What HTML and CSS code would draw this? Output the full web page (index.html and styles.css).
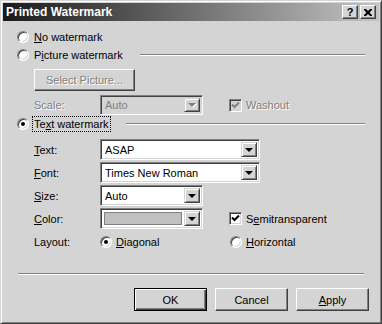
FILE: index.html
```html
<!DOCTYPE html>
<html lang="en">
<head>
    <meta charset="UTF-8">
    <title>Printed Watermark</title>
    <link rel="stylesheet" href="styles.css">
</head>
<body>
    <div class="window">
        <div class="titlebar">
            <span class="title">Printed Watermark</span>
            <span class="cap-btn help">?</span>
            <span class="cap-btn close">
                <svg width="8" height="7" viewBox="0 0 8 7"><path d="M0 0h2l2 2 2-2h2v1l-2.5 2.5L8 6v1H6L4 5 2 7H0V6l2.5-2.5L0 1z" fill="#000"/></svg>
            </span>
        </div>

        <div class="content">
            <div class="opt-row">
                <span class="radio"></span>
                <span class="opt-text"><u>N</u>o watermark</span>
            </div>
            <div class="opt-row">
                <span class="radio"></span>
                <span class="opt-text">P<u>i</u>cture watermark</span>
                <span class="groupline pic-line"></span>
            </div>

            <div class="select-row">
                <span class="btn disabled select-btn">Select Picture...</span>
            </div>

            <div class="field-row scale-row">
                <span class="label disabled-text">Scale:</span>
                <span class="combo short off">
                    <span class="combo-val">Auto</span>
                    <span class="drop off"><i class="tri"></i></span>
                </span>
                <span class="check off"><svg width="9" height="9" viewBox="0 0 9 9"><path d="M1 3.5l2.5 2.5 4.5-4.5" fill="none" stroke="#808080" stroke-width="2"/></svg></span>
                <span class="disabled-text check-text">Washout</span>
            </div>

            <div class="opt-row text-opt">
                <span class="radio on"></span>
                <span class="opt-text focus">Te<u>x</u>t watermark</span>
                <span class="groupline text-line"></span>
            </div>

            <div class="fields">
                <div class="field-row">
                    <span class="label"><u>T</u>ext:</span>
                    <span class="combo wide">
                        <span class="combo-val">ASAP</span>
                        <span class="drop"><i class="tri"></i></span>
                    </span>
                </div>
                <div class="field-row">
                    <span class="label"><u>F</u>ont:</span>
                    <span class="combo wide">
                        <span class="combo-val">Times New Roman</span>
                        <span class="drop"><i class="tri"></i></span>
                    </span>
                </div>
                <div class="field-row">
                    <span class="label"><u>S</u>ize:</span>
                    <span class="combo short">
                        <span class="combo-val">Auto</span>
                        <span class="drop"><i class="tri"></i></span>
                    </span>
                </div>
                <div class="field-row">
                    <span class="label"><u>C</u>olor:</span>
                    <span class="combo short">
                        <span class="swatch"></span>
                        <span class="drop"><i class="tri"></i></span>
                    </span>
                    <span class="check"><svg width="9" height="9" viewBox="0 0 9 9"><path d="M1 3.5l2.5 2.5 4.5-4.5" fill="none" stroke="#000" stroke-width="2"/></svg></span>
                    <span class="check-text">S<u>e</u>mitransparent</span>
                </div>
                <div class="field-row layout-row">
                    <span class="label">Layout:</span>
                    <span class="radio on"></span>
                    <span class="radio-text diag"><u>D</u>iagonal</span>
                    <span class="radio"></span>
                    <span class="radio-text"><u>H</u>orizontal</span>
                </div>
            </div>

            <div class="separator"></div>

            <div class="buttons">
                <span class="btn default">OK</span>
                <span class="btn">Cancel</span>
                <span class="btn"><u>A</u>pply</span>
            </div>
        </div>
    </div>
</body>
</html>
```

FILE: styles.css
```css
* {
    box-sizing: border-box;
}
body {
    margin: 0;
    background-color: #d4d4d4;
    font-family: "Liberation Sans", Arial, sans-serif;
    font-size: 11px;
    color: #000;
}
u {
    text-decoration: underline;
}
.window {
    width: 382px;
    height: 324px;
    border: 1px solid;
    border-color: #d4d4d4 #404040 #404040 #d4d4d4;
    box-shadow: inset 1px 1px 0 #fff, inset -1px -1px 0 #808080;
    padding: 2px;
    background-color: #d4d4d4;
}
.titlebar {
    height: 18px;
    display: flex;
    align-items: center;
    padding: 0 3px 0 3px;
    background: linear-gradient(to right, #1a1a1a, #c4c4c4);
}
.title {
    color: #fff;
    font-weight: bold;
    font-size: 12px;
    flex: 1;
}
.cap-btn {
    width: 16px;
    height: 14px;
    display: flex;
    align-items: center;
    justify-content: center;
    background-color: #d4d4d4;
    border: 1px solid;
    border-color: #fff #404040 #404040 #fff;
    box-shadow: inset -1px -1px 0 #808080;
    font-weight: bold;
    font-size: 11px;
    line-height: 1;
}
.help {
    margin-right: 2px;
}
.content {
    padding-top: 7px;
}
.opt-row {
    height: 18px;
    display: flex;
    align-items: center;
    padding-left: 14px;
    padding-right: 14px;
}
.opt-text {
    margin-left: 3px;
    padding: 1px 1px;
    border: 1px solid transparent;
}
.opt-text.focus {
    border: 1px dotted #000;
}
.radio {
    width: 12px;
    height: 12px;
    border-radius: 50%;
    background-color: #fff;
    border: 1px solid;
    border-color: #808080 #fff #fff #808080;
    box-shadow: inset 1px 1px 0 #404040, inset -1px -1px 0 #d4d4d4;
    display: flex;
    align-items: center;
    justify-content: center;
    flex-shrink: 0;
}
.radio.on::after {
    content: "";
    width: 4px;
    height: 4px;
    border-radius: 50%;
    background-color: #000;
}
.groupline {
    height: 2px;
    border-top: 1px solid #808080;
    border-bottom: 1px solid #fff;
    margin-left: auto;
}
.pic-line {
    width: 225px;
}
.text-line {
    width: 239px;
    margin-top: -1px;
}
.select-row {
    padding-left: 31px;
    margin-top: 5px;
}
.btn {
    height: 23px;
    width: 73px;
    display: inline-flex;
    align-items: center;
    justify-content: center;
    background-color: #d4d4d4;
    border: 1px solid;
    border-color: #fff #404040 #404040 #fff;
    box-shadow: inset -1px -1px 0 #808080;
}
.btn.default {
    border: 1px solid #000;
    box-shadow: inset 1px 1px 0 #fff, inset -1px -1px 0 #404040, inset -2px -2px 0 #808080;
}
.select-btn {
    width: 101px;
    height: 22px;
}
.disabled,
.disabled-text {
    color: #808080;
    text-shadow: 1px 1px 0 #fff;
}
.field-row {
    height: 21px;
    display: flex;
    align-items: center;
    padding-left: 31px;
}
.label {
    width: 66px;
}
.scale-row {
    margin-top: 4px;
    height: 20px;
}
.combo {
    height: 100%;
    display: flex;
    align-items: center;
    padding: 2px;
    background-color: #fff;
    border: 1px solid;
    border-color: #808080 #fff #fff #808080;
    box-shadow: inset 1px 1px 0 #404040, inset -1px -1px 0 #d4d4d4;
}
.combo.wide {
    width: 160px;
}
.combo.short {
    width: 103px;
}
.combo.off {
    background-color: #d4d4d4;
    color: #808080;
}
.combo-val {
    flex: 1;
    padding-left: 2px;
}
.swatch {
    flex: 1;
    height: 13px;
    margin: 0 2px 0 1px;
    border: 1px solid #808080;
    background-color: #c0c0c0;
}
.drop {
    width: 16px;
    height: 100%;
    display: flex;
    align-items: center;
    justify-content: center;
    background-color: #d4d4d4;
    border: 1px solid;
    border-color: #d4d4d4 #404040 #404040 #d4d4d4;
    box-shadow: inset 1px 1px 0 #fff, inset -1px -1px 0 #808080;
}
.tri {
    width: 0;
    height: 0;
    border-left: 4px solid transparent;
    border-right: 4px solid transparent;
    border-top: 4px solid #000;
}
.drop.off .tri {
    border-top-color: #808080;
    filter: drop-shadow(1px 1px 0 #fff);
}
.check {
    width: 13px;
    height: 13px;
    margin-left: 26px;
    display: flex;
    align-items: center;
    justify-content: center;
    background-color: #fff;
    border: 1px solid;
    border-color: #808080 #fff #fff #808080;
    box-shadow: inset 1px 1px 0 #404040, inset -1px -1px 0 #d4d4d4;
}
.check.off {
    background-color: #d4d4d4;
}
.check-text {
    margin-left: 4px;
}
.text-opt {
    margin-top: 0;
}
.fields {
    margin-top: 6px;
    display: flex;
    flex-direction: column;
    gap: 2px;
}
.layout-row {
    height: 18px;
    margin-top: 2px;
}
.radio-text {
    margin-left: 4px;
}
.radio-text.diag {
    width: 114px;
}
.separator {
    height: 2px;
    margin: 22px 15px 0 15px;
    border-top: 1px solid #808080;
    border-bottom: 1px solid #fff;
}
.buttons {
    display: flex;
    justify-content: flex-end;
    gap: 8px;
    padding-right: 10px;
    margin-top: 13px;
}
```
